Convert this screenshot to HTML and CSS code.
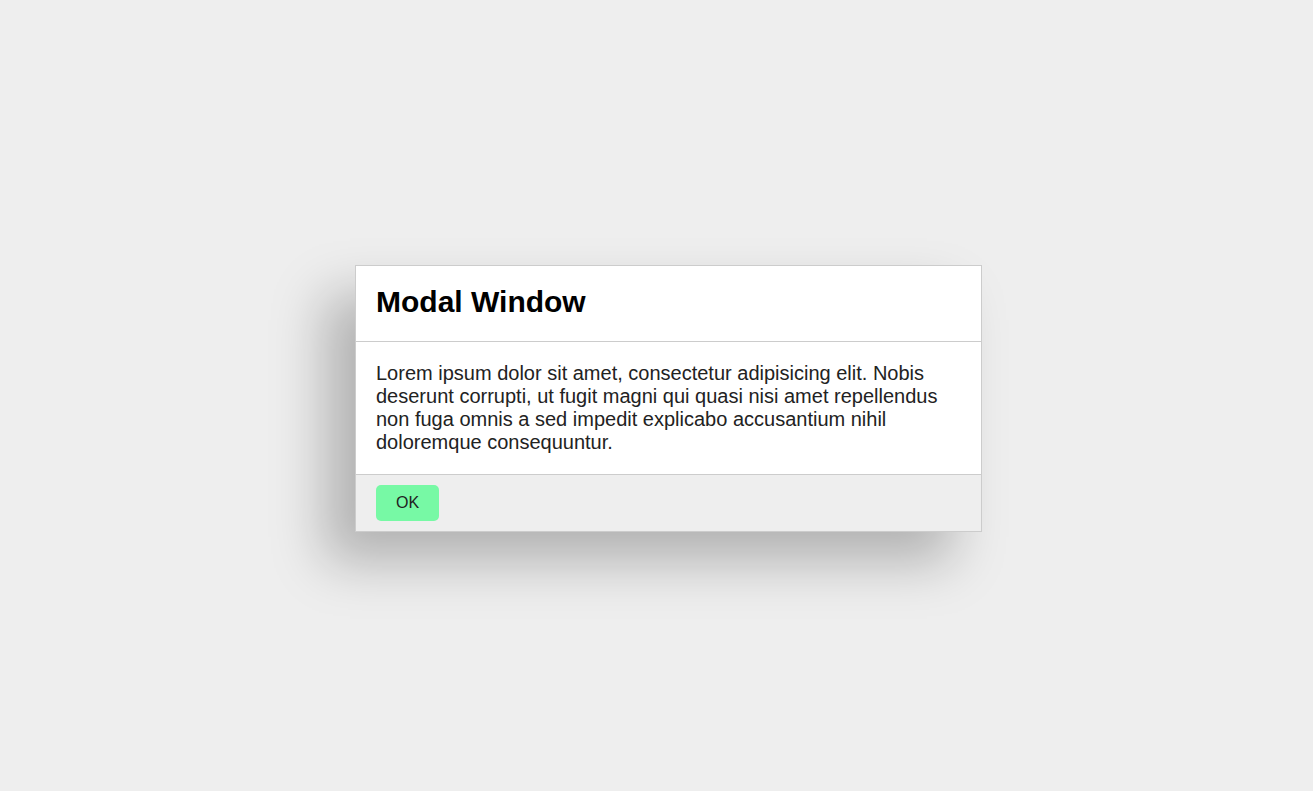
FILE: index.html
```html
<!DOCTYPE html>
<html lang="en">
<head>
  <meta charset="UTF-8">
  <title>Modal Window</title>
  <link rel="stylesheet" href="styles.css">
</head>
<body>

  <div class="overlay">
    <div class="modal">
      <div class="modal-header">
        <h2>Modal Window</h2>
      </div>
      <div class="modal-body">
        <p>Lorem ipsum dolor sit amet, consectetur adipisicing elit. Nobis deserunt corrupti, ut fugit magni qui quasi nisi amet repellendus non fuga omnis a sed impedit explicabo accusantium nihil doloremque consequuntur.</p>
      </div>
      <div class="modal-footer">
        <button class="btn-ok">OK</button>
      </div>
    </div>
  </div>

</body>
</html>
```
FILE: styles.css
```css
* {
  box-sizing: border-box;
}

body {
  margin: 0;
  font-family: 'Liberation Sans', Arial, sans-serif;
  background-color: #eee;
  color: #222;
}

.overlay {
  height: 100vh;
  display: flex;
  justify-content: center;
  align-items: center;
  padding-left: 24px;
  padding-top: 5px;
}

.modal {
  width: 627px;
  background-color: #fff;
  border: 1px solid #ccc;
  box-shadow: -30px 30px 50px rgba(0, 0, 0, 0.25);
}

.modal-header {
  padding: 18px 20px 22px;
  border-bottom: 1px solid #ccc;
}

.modal-header h2 {
  margin: 0;
  font-size: 30px;
  line-height: 35px;
  color: #000;
}

.modal-body {
  padding: 20px 20px 20px;
}

.modal-body p {
  margin: 0;
  font-size: 20px;
  line-height: 23px;
}

.modal-footer {
  background-color: #eee;
  border-top: 1px solid #ccc;
  padding: 10px 20px;
}

.btn-ok {
  background-color: #77f9a5;
  border: none;
  border-radius: 5px;
  padding: 0 20px;
  height: 36px;
  width: 63px;
  font-family: inherit;
  font-size: 16px;
  color: #222;
  cursor: pointer;
}
```
